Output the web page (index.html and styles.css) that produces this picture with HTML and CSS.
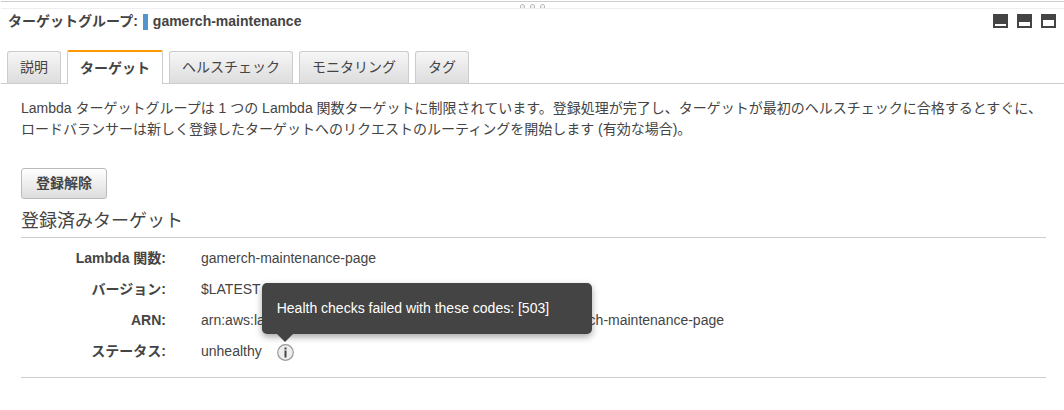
FILE: index.html
```html
<!DOCTYPE html>
<html lang="ja">

<head>
    <meta charset="UTF-8" />
    <title>ターゲットグループ</title>
    <link rel="stylesheet" href="styles.css">
</head>

<body>
    <div class="splitter">
        <svg class="grip" width="25" height="4" viewBox="0 0 25 4">
            <g fill="#eeeeee" stroke="#bbbbbb">
                <path d="M0.5 4V1.5L1.5 0.5H3.5L4.5 1.5V4" />
                <path d="M10.5 4V1.5L11.5 0.5H13.5L14.5 1.5V4" />
                <path d="M20.5 4V1.5L21.5 0.5H23.5L24.5 1.5V4" />
            </g>
        </svg>
    </div>

    <header class="panel-header">
        <h1 class="panel-title">ターゲットグループ:<span class="marker"></span>gamerch-maintenance</h1>
        <div class="panel-sizes">
            <button class="size-button" type="button" aria-label="最小化">
                <svg width="15" height="14"><path fill="#444444" d="M0 0h15v14H0z" /><path fill="#ffffff" d="M2 10h11v2H2z" /></svg>
            </button>
            <button class="size-button" type="button" aria-label="中">
                <svg width="15" height="14"><path fill="#444444" d="M0 0h15v14H0z" /><path fill="#ffffff" d="M2 8h11v4H2z" /></svg>
            </button>
            <button class="size-button" type="button" aria-label="最大化">
                <svg width="15" height="14"><path fill="#444444" d="M0 0h15v14H0z" /><path fill="#ffffff" d="M2 6h11v6H2z" /></svg>
            </button>
        </div>
    </header>

    <nav class="tabs">
        <button class="tab" type="button">説明</button>
        <button class="tab active" type="button">ターゲット</button>
        <button class="tab" type="button">ヘルスチェック</button>
        <button class="tab" type="button">モニタリング</button>
        <button class="tab" type="button">タグ</button>
    </nav>

    <main class="content">
        <p class="note">Lambda ターゲットグループは 1 つの Lambda 関数ターゲットに制限されています。登録処理が完了し、ターゲットが最初のヘルスチェックに合格するとすぐに、ロードバランサーは新しく登録したターゲットへのリクエストのルーティングを開始します (有効な場合)。</p>

        <button class="deregister" type="button">登録解除</button>

        <h2 class="section-title">登録済みターゲット</h2>
        <dl class="details">
            <dt>Lambda 関数:</dt>
            <dd>gamerch-maintenance-page</dd>
            <dt>バージョン:</dt>
            <dd>$LATEST</dd>
            <dt>ARN:</dt>
            <dd>arn:aws:lambda:ap-northeast-1:000000000000:function:gamerch-maintenance-page</dd>
            <dt>ステータス:</dt>
            <dd class="status">unhealthy
                <span class="info">
                    <button class="info-button" type="button" aria-label="詳細" aria-describedby="reason">
                        <svg width="17" height="17" viewBox="0 0 17 17">
                            <circle cx="8.5" cy="8.5" r="7.8" fill="#eeeeee" stroke="#999999" stroke-width="1.2" />
                            <path fill="#444444" d="M7.5 3.5h2v2h-2zM7.5 6.5h2v7h-2z" />
                        </svg>
                    </button>
                    <span class="tooltip" id="reason" role="tooltip">Health checks failed with these codes: [503]</span>
                </span>
            </dd>
        </dl>
    </main>
</body>

</html>
```

FILE: styles.css
```css
body {
    margin: 0;
    padding: 1px 0 0 1px;
    background-color: #ffffff;
    color: #444444;
    font-family: "Liberation Sans", Arial, "Noto Sans CJK JP", sans-serif;
    font-size: 14px;
    line-height: 21px;
}

button {
    font: inherit;
    color: inherit;
    cursor: pointer;
}

svg {
    display: block;
}

.splitter {
    display: flex;
    justify-content: center;
    align-items: flex-end;
    height: 6px;
    border-top: 1px solid #cccccc;
    border-bottom: 1px solid #eeeeee;
}

.panel-header {
    display: flex;
    justify-content: space-between;
    align-items: flex-start;
    padding: 2px 8px 0 7px;
}

.panel-title {
    display: flex;
    align-items: center;
    margin: 0;
    font-size: 14px;
    line-height: 21px;
}

.marker {
    width: 5px;
    height: 16px;
    margin: 0 5px;
    background-color: #5294cf;
}

.panel-sizes {
    display: flex;
    gap: 9px;
    padding-top: 3px;
}

.size-button {
    padding: 0;
    border: none;
    background: none;
}

.tabs {
    display: flex;
    align-items: flex-end;
    gap: 6px;
    margin-top: 18px;
    padding-left: 6px;
    border-bottom: 1px solid #cccccc;
}

.tab {
    height: 32px;
    padding: 0 12px;
    border: 1px solid #cccccc;
    border-bottom: none;
    border-radius: 3px 3px 0 0;
    background: linear-gradient(#f6f6f6, #dddddd);
}

.tab.active {
    height: 34px;
    margin-bottom: -1px;
    border-top: 2px solid #ff9900;
    border-radius: 2px 2px 0 0;
    background: #ffffff;
    font-weight: bold;
}

.content {
    padding: 14px 18px 0 20px;
}

.note {
    margin: 0 0 28px;
}

.deregister {
    height: 31px;
    padding: 0 14px;
    border: 1px solid #bbbbbb;
    border-radius: 3px;
    background: linear-gradient(#ffffff, #dddddd);
    font-weight: bold;
}

.section-title {
    margin: 9px 0 0;
    padding-bottom: 3px;
    border-bottom: 1px solid #cccccc;
    font-size: 18px;
    font-weight: normal;
    line-height: 26px;
}

.details {
    display: grid;
    grid-template-columns: 145px 1fr;
    column-gap: 35px;
    row-gap: 10px;
    margin: 0;
    padding: 10px 0 15px;
    border-bottom: 1px solid #cccccc;
}

.details dt {
    text-align: right;
    font-weight: bold;
}

.details dd {
    margin: 0;
}

.details .status {
    display: flex;
    align-items: center;
    gap: 15px;
}

.info {
    position: relative;
    padding-top: 2px;
}

.info-button {
    display: block;
    padding: 0;
    border: none;
    background: none;
}

.tooltip {
    position: absolute;
    left: -15px;
    bottom: 27px;
    box-sizing: border-box;
    width: 330px;
    padding: 15px;
    border-radius: 5px;
    background-color: #444444;
    box-shadow: 0 3px 7px rgba(0, 0, 0, 0.35);
    color: #ffffff;
}

.tooltip::after {
    content: "";
    position: absolute;
    top: 100%;
    left: 15px;
    border: 8px solid transparent;
    border-top-color: #444444;
    border-bottom: none;
}
```
